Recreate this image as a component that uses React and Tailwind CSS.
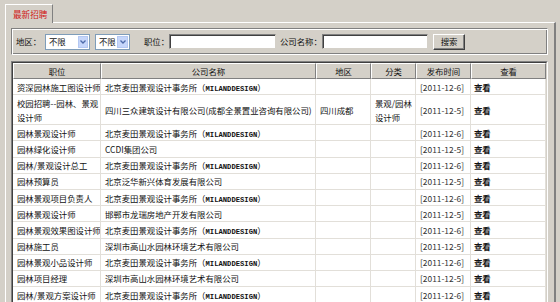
import React from "react";

const M = "milan";
const rows = [
  ["资深园林施工图设计师", M, "", "", "[2011-12-6]"],
  [["校园招聘--园林、景观", "设计师"], "四川三众建筑设计有限公司(成都全景置业咨询有限公司)", "四川成都", ["景观/园林", "设计师"], "[2011-12-5]"],
  ["园林景观设计师", M, "", "", "[2011-12-6]"],
  ["园林绿化设计师", "CCDI集团公司", "", "", "[2011-12-5]"],
  ["园林/景观设计总工", M, "", "", "[2011-12-6]"],
  ["园林预算员", "北京泛华新兴体育发展有限公司", "", "", "[2011-12-5]"],
  ["园林景观项目负责人", M, "", "", "[2011-12-6]"],
  ["园林景观设计师", "邯郸市龙瑞房地产开发有限公司", "", "", "[2011-12-5]"],
  ["园林景观效果图设计师", M, "", "", "[2011-12-6]"],
  ["园林施工员", "深圳市高山水园林环境艺术有限公司", "", "", "[2011-12-5]"],
  ["园林景观小品设计师", M, "", "", "[2011-12-6]"],
  ["园林项目经理", "深圳市高山水园林环境艺术有限公司", "", "", "[2011-12-5]"],
  ["园林/景观方案设计师", M, "", "", "[2011-12-6]"],
];

function Cell({ v }) {
  if (v === M)
    return (
      <span>
        北京麦田景观设计事务所（<span className="font-['Liberation_Mono',monospace] text-[7.2px] leading-[0] font-bold">MILANDDESIGN</span>）
      </span>
    );
  if (Array.isArray(v))
    return (
      <span>
        {v[0]}
        <br />
        {v[1]}
      </span>
    );
  return <span>{v}</span>;
}

function Select({ w, bw }) {
  return (
    <div className={`${w} shrink-0 h-[16px] bg-white border border-[#7f9db9] flex items-stretch`}>
      <div className="flex-1 pl-[3px] flex items-center leading-none">不限</div>
      <div className={`${bw} my-[1px] mr-[1px] bg-[#c6d6fa] border border-[#b4c8f2] flex items-center justify-center`}>
        <svg width="6" height="4" viewBox="0 0 6 4">
          <path d="M0.5 0.5 L3 3 L5.5 0.5" stroke="#4d6aa8" strokeWidth="1.3" fill="none" />
        </svg>
      </div>
    </div>
  );
}

function Input({ w }) {
  return (
    <div className={`${w} shrink-0 h-[15px] bg-white border border-t-[#808080] border-l-[#808080] border-b-[#d4d0c8] border-r-[#d4d0c8] shadow-[inset_1px_1px_0_#404040]`} />
  );
}

const widths = ["w-[88px]", "w-[215px]", "w-[55px]", "w-[45px]", "w-[55px]", "w-[75px]"];
const heads = ["职位", "公司名称", "地区", "分类", "发布时间", "查看"];

export default function App() {
  return (
    <div className="w-[560px] h-[302px] overflow-hidden bg-[#d4d0c8] pt-[4px] pl-[5px] font-['Noto_Sans_CJK_SC',sans-serif] text-[8.4px] text-[#111]">
      <div className="relative z-10 w-[48px] h-[19px] -mb-px bg-[#d4d0c8] border-t border-l border-white border-r border-r-[#808080] flex items-center pl-[7px] text-[#d01818] text-[8.6px]">
        最新招聘
      </div>
      <div className="w-[551px] h-[300px] border-t border-l border-white border-r-2 border-r-[#808080] pl-[5px] pt-[5px]">
        <div className="w-[537px] h-[27px] border border-[#808080] border-b-white border-r-white shadow-[inset_1px_1px_0_#fff,inset_-1px_-1px_0_#808080] flex items-center pl-[4px] whitespace-nowrap">
          <span className="w-[29px] shrink-0">地区：</span>
          <Select w="w-[45px]" bw="w-[10px]" />
          <div className="ml-[5px] shrink-0">
            <Select w="w-[35px]" bw="w-[11px]" />
          </div>
          <span className="ml-[14px] w-[25px] shrink-0">职位：</span>
          <Input w="w-[107px]" />
          <span className="ml-[4px] w-[42px] shrink-0">公司名称：</span>
          <Input w="w-[106px]" />
          <div className="ml-[5px] shrink-0 w-[32px] h-[16px] bg-[#d4d0c8] border border-t-white border-l-white border-b-[#404040] border-r-[#404040] shadow-[inset_-1px_-1px_0_#808080] flex items-center justify-center leading-none">
            搜索
          </div>
        </div>
        <div className="mt-[6px] w-[537px] border border-[#808080] border-b-white border-r-white">
          <div className="border border-[#404040] border-b-[#d4d0c8] border-r-[#d4d0c8]">
            <table className="table-fixed border-separate border-spacing-0 w-[533px] leading-[14px]">
              <colgroup>
                {widths.map((w, i) => (
                  <col key={i} className={w} />
                ))}
              </colgroup>
              <thead>
                <tr className="h-[15px]">
                  {heads.map((h, i) => (
                    <th
                      key={i}
                      className="p-0 font-normal text-center bg-[#d4d0c8] border-t border-l border-white border-b border-r border-b-[#808080] border-r-[#808080] text-[#111]"
                    >
                      {h}
                    </th>
                  ))}
                </tr>
              </thead>
              <tbody>
                {rows.map((r, i) => (
                  <tr key={i} className={`${i === 1 ? "h-[30px]" : "h-[16.2px]"} bg-white`}>
                    {r.map((v, j) => (
                      <td
                        key={j}
                        className={`p-0 pl-[4px] whitespace-nowrap overflow-hidden border-b border-r border-[#e2dfd9] ${j === 4 ? "text-[#333]" : ""}`}
                      >
                        <Cell v={v} />
                      </td>
                    ))}
                    <td className="p-0 pl-[3px] whitespace-nowrap border-b border-r border-[#e2dfd9] font-bold">查看</td>
                  </tr>
                ))}
              </tbody>
            </table>
          </div>
        </div>
      </div>
    </div>
  );
}
